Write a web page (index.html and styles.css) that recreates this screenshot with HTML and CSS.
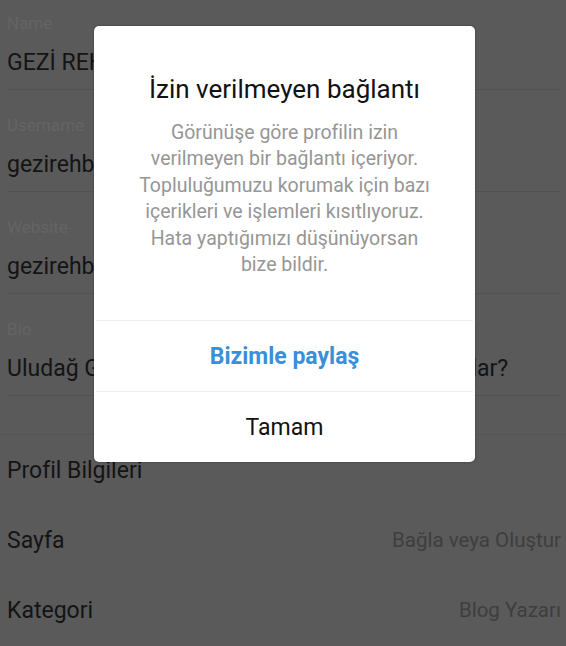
FILE: index.html
```html
<!DOCTYPE html>
<html lang="tr">
<head>
<meta charset="utf-8">
<title>Profili Düzenle</title>
<link rel="stylesheet" href="styles.css">
</head>
<body>
<div class="screen">
  <div class="fields">
    <div class="field first">
      <div class="label">Name</div>
      <div class="value">GEZİ REHBERİ</div>
    </div>
    <div class="field">
      <div class="label">Username</div>
      <div class="value">gezirehberi</div>
    </div>
    <div class="field">
      <div class="label">Website</div>
      <div class="value">gezirehberi.com</div>
    </div>
    <div class="field">
      <div class="label">Bio</div>
      <div class="value">Uludağ Gezisinde Neler Yapılır, Fiyatlar Ne Kadar?</div>
    </div>
  </div>
  <div class="section">
    <div class="row"><span class="row-title">Profil Bilgileri</span></div>
    <div class="row"><span class="row-title">Sayfa</span><span class="row-value">Bağla veya Oluştur</span></div>
    <div class="row"><span class="row-title">Kategori</span><span class="row-value">Blog Yazarı</span></div>
  </div>

  <div class="modal">
    <div class="modal-content">
      <div class="modal-title">İzin verilmeyen bağlantı</div>
      <div class="modal-text">Görünüşe göre profilin izin<br>verilmeyen bir bağlantı içeriyor.<br>Topluluğumuzu korumak için bazı<br>içerikleri ve işlemleri kısıtlıyoruz.<br>Hata yaptığımızı düşünüyorsan<br>bize bildir.</div>
    </div>
    <div class="modal-btn primary">Bizimle paylaş</div>
    <div class="modal-btn">Tamam</div>
  </div>
</div>
</body>
</html>
```
FILE: styles.css
```css
html, body {
  margin: 0;
  padding: 0;
  background: #5a5a5a;
}
body {
  font-family: Roboto, "Noto Sans", "Liberation Sans", sans-serif;
  width: 566px;
  height: 646px;
  overflow: hidden;
}
.screen {
  position: relative;
  width: 566px;
  height: 646px;
  overflow: hidden;
}
.fields {
  padding: 0 6px 0 7px;
}
.field {
  padding: 25px 0 11px;
  border-bottom: 1px solid #525252;
}
.field.first {
  padding-top: 13px;
}
.label {
  font-size: 17px;
  line-height: 20px;
  color: #646464;
}
.value {
  margin-top: 15px;
  font-size: 23px;
  line-height: 30px;
  color: #141414;
  white-space: nowrap;
  overflow: hidden;
}
.section {
  margin-top: 38px;
  border-top: 1px solid #545454;
}
.row {
  height: 70px;
  display: flex;
  align-items: center;
  justify-content: space-between;
  padding: 0 5px 0 7px;
}
.row-title {
  font-size: 23px;
  color: #141414;
}
.row-value {
  font-size: 20.5px;
  color: #3e3e3e;
}
.modal {
  position: absolute;
  left: 94px;
  top: 26px;
  width: 381px;
  height: 436px;
  background: #fff;
  border-radius: 5px;
  box-shadow: 0 0 2px rgba(0, 0, 0, 0.45);
  display: flex;
  flex-direction: column;
}
.modal-content {
  padding: 48px 10px 0;
  height: 294px;
  flex-shrink: 0;
  box-sizing: border-box;
  text-align: center;
}
.modal-title {
  font-size: 26px;
  line-height: 30px;
  color: #121212;
}
.modal-text {
  margin-top: 16px;
  font-size: 19.5px;
  line-height: 26.4px;
  color: #969696;
}
.modal-btn {
  height: 71px;
  flex-shrink: 0;
  display: flex;
  align-items: center;
  justify-content: center;
  border-top: 1px solid #efefef;
  margin: 0 2px;
  box-sizing: border-box;
  font-size: 23px;
  color: #121212;
}
.modal-btn.primary {
  font-weight: 700;
  color: #3a8fd9;
}
```
